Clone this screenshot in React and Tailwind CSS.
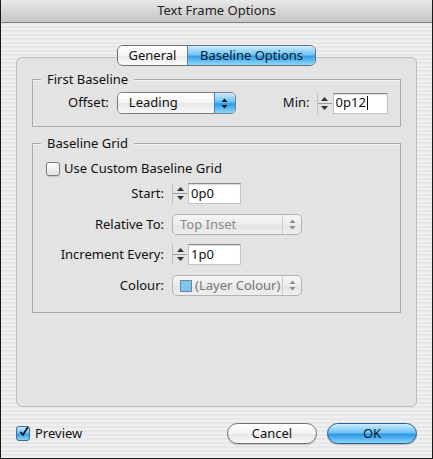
import React from "react";

function Arrows({ color = "#222" }) {
  return (
    <svg width="7" height="11" viewBox="0 0 7 11">
      <path d="M3.5 0.5 L6.5 4 L0.5 4 Z" fill={color} />
      <path d="M3.5 10.5 L6.5 7 L0.5 7 Z" fill={color} />
    </svg>
  );
}

function Stepper({ value, width, cursor }) {
  return (
    <div className="flex h-[21px]">
      <div className="w-[15px] h-full flex flex-col border-l border-[#c2c2c2]">
        <div className="flex-1 flex items-end justify-center pb-[2px] border-b border-[#9c9c9c]">
          <svg width="7" height="4" viewBox="0 0 7 4"><path d="M3.5 0 L7 4 L0 4 Z" fill="#333" /></svg>
        </div>
        <div className="flex-1 flex items-start justify-center pt-[2px]">
          <svg width="7" height="4" viewBox="0 0 7 4"><path d="M3.5 4 L7 0 L0 0 Z" fill="#333" /></svg>
        </div>
      </div>
      <div
        className={`${width} ml-px h-full bg-white border border-[#c4c4c4] border-t-[#8a8a8a] shadow-[inset_0_1px_1px_rgba(0,0,0,0.15)] pl-[2px] flex items-center text-[13px] text-[#111]`}
      >
        {value}
        {cursor && <span className="ml-px w-px h-[14px] bg-black" />}
      </div>
    </div>
  );
}

function Popup({ children, disabled, width }) {
  if (disabled) {
    return (
      <div className={`${width} h-[21px] flex rounded-[5px] border border-[#b3b3b3] bg-[linear-gradient(#f6f6f6,#ececec_50%,#e4e4e4_51%,#efefef)] text-[#8a8a8a] text-[13px]`}>
        <div className="flex-1 flex items-center pl-[7px] gap-[3px] overflow-hidden whitespace-nowrap">{children}</div>
        <div className="w-[19px] flex items-center justify-center border-l border-[#cfcfcf]">
          <Arrows color="#8c8c8c" />
        </div>
      </div>
    );
  }
  return (
    <div className={`${width} h-[22px] flex rounded-[5px] border border-[#7b7b7b] overflow-hidden text-[13px] text-[#111]`}>
      <div className="flex-1 flex items-center pl-[11px] bg-[linear-gradient(#ffffff,#f4f4f4_50%,#e6e6e6_51%,#f7f7f7)]">{children}</div>
      <div className="w-[21px] flex items-center justify-center border-l border-[#3d86c2] bg-[linear-gradient(#cfeefe,#68c0f3_45%,#2f9ae6_55%,#8fd8fc)]">
        <Arrows color="#111" />
      </div>
    </div>
  );
}

function Group({ title, className, children }) {
  return (
    <div className={`relative border border-[#ababab] shadow-[inset_0_1px_0_#f4f4f4] ${className}`}>
      <span className="absolute left-[8px] top-[-10px] px-[6px] bg-[#e3e3e3] text-[13px] leading-[18px] text-[#111]">
        {title}
      </span>
      {children}
    </div>
  );
}

function Row({ label, children, className }) {
  return (
    <div className={`flex items-center ${className}`}>
      <span className="w-[139px] pr-[8px] text-right text-[13px] text-[#111]">{label}</span>
      {children}
    </div>
  );
}

export default function App() {
  return (
    <div className="w-[433px] h-[459px] flex flex-col border-x border-b border-[#1a1a1a] bg-[repeating-linear-gradient(#efefef_0px,#efefef_2px,#e7e7e7_2px,#e7e7e7_4px)] font-['Noto_Sans',sans-serif] overflow-hidden">
      <div className="h-[23px] shrink-0 flex items-center justify-center border-b border-[#808080] bg-[linear-gradient(#e9e9e9,#d6d6d6_50%,#c6c6c6)] text-[13px] text-[#222]">
        Text Frame Options
      </div>

      <div className="px-[15px] pt-[22px] flex flex-col">
        <div className="relative z-10 self-center flex h-[21px] rounded-[6px] border border-[#6e6e6e] overflow-hidden text-[13px]">
          <div className="w-[69px] flex items-center justify-center bg-[linear-gradient(#ffffff,#f6f6f6_50%,#e9e9e9_51%,#fbfbfb)] text-[#111]">
            General
          </div>
          <div className="w-[128px] flex items-center justify-center border-l border-[#5b7fa6] bg-[linear-gradient(#cdeefe,#71c5f4_45%,#35a0e8_55%,#8ed9fd)] text-[#0c1a2c]">
            Baseline Options
          </div>
        </div>

        <div className="-mt-[9px] h-[350px] rounded-[6px] border border-[#bdbdbd] bg-[#e3e3e3] px-[15px] pt-[21px]">
          <Group title="First Baseline" className="h-[48px] flex items-center">
            <span className="ml-[35px] text-[13px] text-[#111]">Offset:</span>
            <div className="ml-[8px]">
              <Popup width="w-[119px]">Leading</Popup>
            </div>
            <span className="ml-[47px] text-[13px] text-[#111]">Min:</span>
            <div className="ml-[7px]">
              <Stepper value="0p12" width="w-[55px]" cursor />
            </div>
          </Group>

          <Group title="Baseline Grid" className="mt-[16px] h-[170px] pt-[17px]">
            <div className="flex items-center h-[16px] pl-[13px]">
              <div className="w-[14px] h-[14px] rounded-[3px] border border-[#7a7a7a] bg-[linear-gradient(#ffffff,#e3e3e3)] shadow-[0_1px_1px_rgba(0,0,0,0.15)]" />
              <span className="ml-[4px] text-[13px] text-[#111]">Use Custom Baseline Grid</span>
            </div>
            <Row label="Start:" className="mt-[6px]">
              <Stepper value="0p0" width="w-[53px]" />
            </Row>
            <Row label="Relative To:" className="mt-[10px]">
              <Popup disabled width="w-[130px]">Top Inset</Popup>
            </Row>
            <Row label="Increment Every:" className="mt-[9px]">
              <Stepper value="1p0" width="w-[53px]" />
            </Row>
            <Row label="Colour:" className="mt-[10px]">
              <Popup disabled width="w-[130px]">
                <span className="w-[12px] h-[12px] shrink-0 border border-[#6a8aa0] bg-[#80c4ec]" />
                <span className="text-[#777]">(Layer Colour)</span>
              </Popup>
            </Row>
          </Group>
        </div>

        <div className="mt-[16px] flex items-center">
          <div className="w-[14px] h-[15px] rounded-[3px] border border-[#3a6d9a] bg-[linear-gradient(#cdeefe,#6cc2f3_45%,#3199e3_55%,#8ad6fb)] flex items-center justify-center">
            <svg width="14" height="16" viewBox="0 0 14 16" className="-mt-[4px] ml-[2px]">
              <path d="M2 8 L5.5 12 L12.5 1" stroke="#111" strokeWidth="2.4" fill="none" />
            </svg>
          </div>
          <span className="ml-[5px] text-[13px] text-[#111]">Preview</span>
          <div className="ml-auto flex gap-[10px]">
            <button className="w-[90px] h-[21px] rounded-full border border-[#717171] bg-[linear-gradient(#ffffff,#f4f4f4_50%,#e4e4e4_51%,#fafafa)] text-[13px] text-[#111] shadow-[0_1px_1px_rgba(0,0,0,0.2)]">
              Cancel
            </button>
            <button className="w-[90px] h-[21px] rounded-full border border-[#2a5e90] bg-[linear-gradient(#cdeefe,#6ec3f4_45%,#2e97e4_55%,#88d5fc)] text-[13px] text-[#0b1626] shadow-[0_1px_1px_rgba(0,0,0,0.2)]">
              OK
            </button>
          </div>
        </div>
      </div>
    </div>
  );
}
